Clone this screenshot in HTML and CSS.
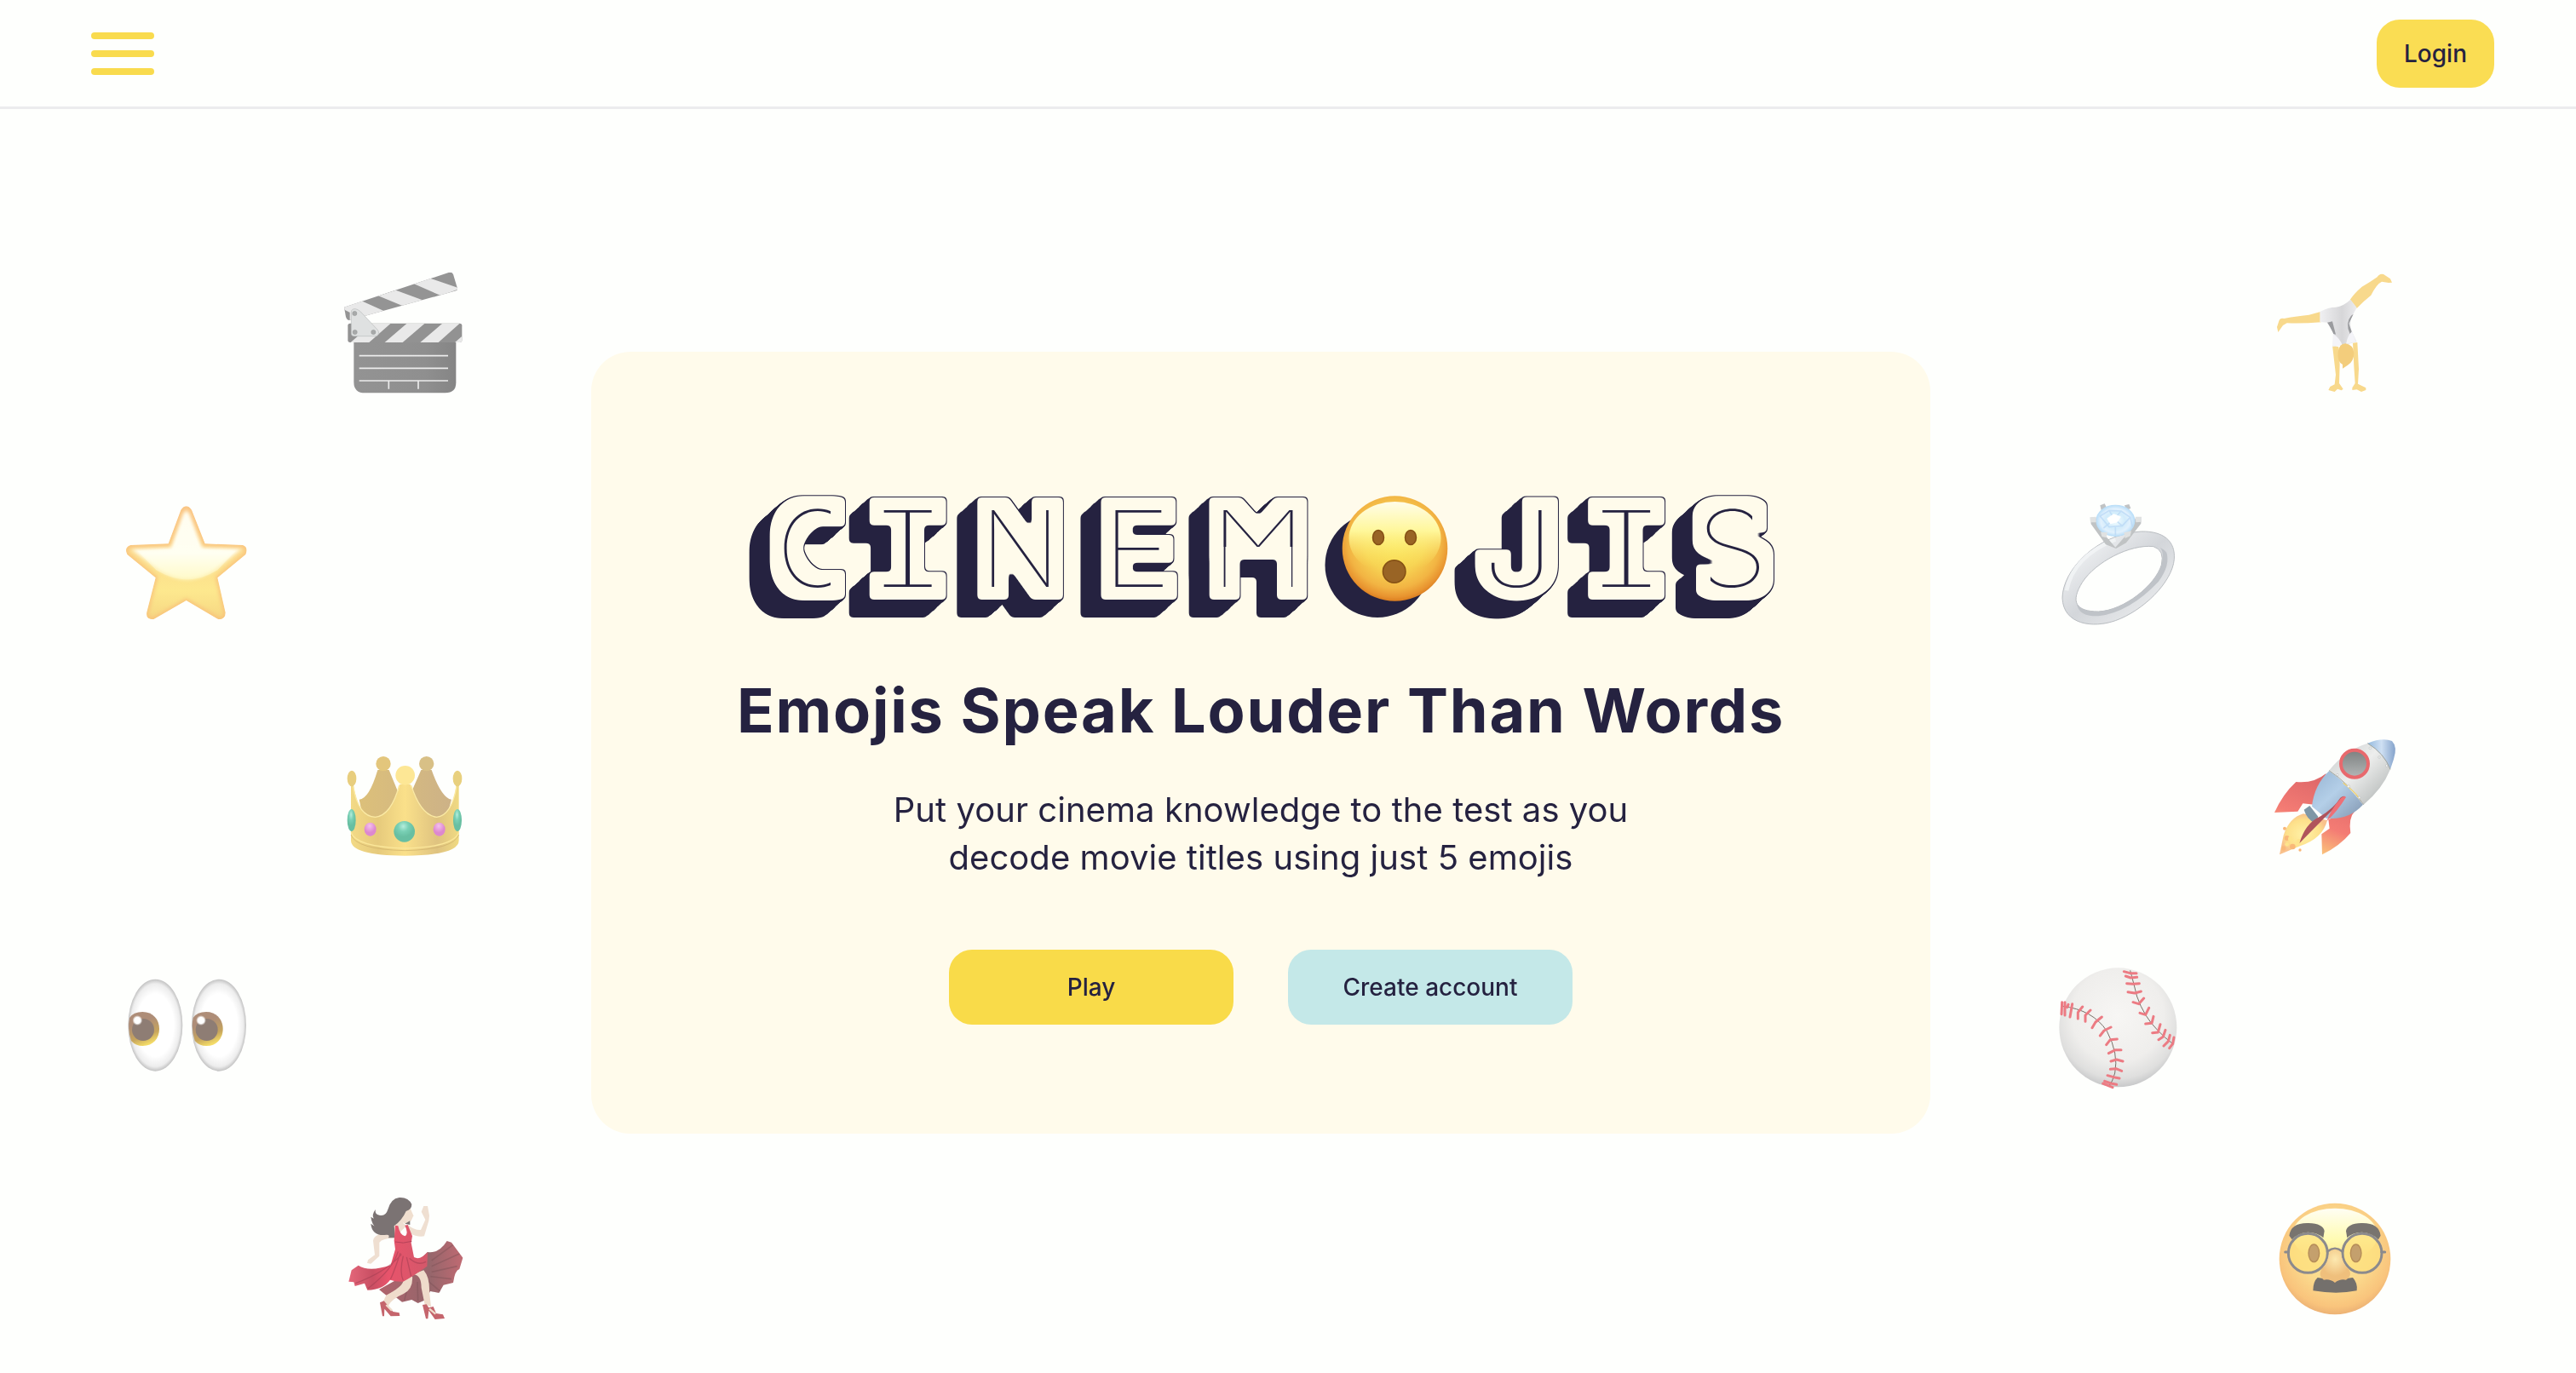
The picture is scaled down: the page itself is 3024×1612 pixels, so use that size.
FILE: index.html
```html
<!DOCTYPE html>
<html lang="en">
<head>
<meta charset="utf-8">
<title>Cinemojis</title>
<link rel="stylesheet" href="styles.css">
</head>
<body>
<header class="topbar">
  <button class="menu" aria-label="Menu"><span></span><span></span><span></span></button>
  <button class="btn login">Login</button>
</header>
<main class="stage">
  <div class="column left">
    <svg class="emoji inner first" viewBox="0 0 540 540" aria-hidden="true">
      <defs>
        <clipPath id="armTop"><path d="M72 182 440 60Q452 57 456 66L471 116Q472 121 466 124L90 228Q82 228 78 216Z"/></clipPath>
        <clipPath id="armLow"><rect x="85" y="239" width="402" height="67" rx="8"/></clipPath>
        <linearGradient id="slate"><stop offset="0" stop-color="#939393"/><stop offset=".7" stop-color="#8f8f8f"/><stop offset="1" stop-color="#858585"/></linearGradient>
      </defs>
      <path d="M106 300H466V448Q466 484 428 484H146Q106 484 106 446Z" fill="url(#slate)"/>
      <path d="M125 353H438M125 397H438M125 441H438M229 441V470M333 441V470" stroke="#ececec" stroke-width="5"/>
      <g clip-path="url(#armTop)"><path d="M60 40H480V240H60Z" fill="#949494"/><path d="M60 184 130 158 210 194 150 230ZM192 142 254 122 352 158 290 182ZM318 100 374 80 480 116 414 142ZM92 200 160 215 150 230 92 230Z" fill="#e9e9e9"/></g>
      <g clip-path="url(#armLow)"><path d="M80 230H490V310H80Z" fill="#929292"/><path d="M170 240H235L160 306H95ZM292 240H355L278 306H215ZM417 240H478L404 306H340ZM462 306 490 282V306Z" fill="#e9e9e9"/></g>
      <path d="M97 200Q97 187 112 188 122 190 130 198L190 262Q200 276 186 284H106Q97 284 97 274Z" fill="#dfe1e1" stroke="#b9bcbc" stroke-width="2"/>
      <g fill="#a7a9a9" stroke="#8f9191"><circle cx="109" cy="204" r="8"/><circle cx="110" cy="270" r="8"/><circle cx="175" cy="270" r="8"/></g>
    </svg>
    <svg class="emoji outer gap-l2" viewBox="0 0 540 540" aria-hidden="true">
      <defs>
        <linearGradient id="starBase" x2="0" y2="1"><stop offset="0" stop-color="#fdd29a"/><stop offset=".55" stop-color="#fce08c"/><stop offset=".75" stop-color="#fde88e"/><stop offset="1" stop-color="#f6d682"/></linearGradient>
        <linearGradient id="starGloss" x2="0" y2="1"><stop offset="0" stop-color="#fffdf0"/><stop offset=".6" stop-color="#fffff2"/><stop offset="1" stop-color="#fffac9"/></linearGradient>
        <clipPath id="starClip"><path id="starShape" d="M247 86Q266 60 285 86L332 205 465 210Q486 218 475 243L376 325 404 448Q404 472 380 472L266 405 150 472Q122 472 127 446L158 325 58 243Q46 218 70 210L203 205Z"/></clipPath>
        <filter id="soft" x="-10%" y="-10%" width="120%" height="120%" color-interpolation-filters="sRGB"><feGaussianBlur stdDeviation="7"/></filter>
      </defs>
      <g clip-path="url(#starClip)"><use href="#starShape" fill="url(#starBase)"/>
        <path d="M255 98Q266 85 277 98L322 218 462 222 366 298Q270 364 170 298L72 224 212 218Z" fill="url(#starGloss)" filter="url(#soft)"/>
        <path d="M262 110Q266 100 270 110L316 224 440 230 376 298Q270 364 160 298L94 230 218 224Z" fill="url(#starGloss)" opacity=".5"/>
        <use href="#starShape" fill="none" stroke="#f9c07a" stroke-width="12" filter="url(#soft)"/></g>
    </svg>
    <svg class="emoji inner2 gap-l3" viewBox="0 0 540 540" aria-hidden="true">
      <defs>
        <linearGradient id="gold"><stop offset="0" stop-color="#f3da86"/><stop offset=".25" stop-color="#e6ca7c"/><stop offset=".5" stop-color="#fae08a"/><stop offset=".8" stop-color="#dfc380"/><stop offset="1" stop-color="#f0da82"/></linearGradient>
        <linearGradient id="goldBack"><stop offset="0" stop-color="#dcc07a"/><stop offset="1" stop-color="#cdb287"/></linearGradient>
        <radialGradient id="jade" cx=".45" cy=".25"><stop offset="0" stop-color="#b5eddc"/><stop offset=".5" stop-color="#79d0b5"/><stop offset="1" stop-color="#68bfa2"/></radialGradient>
        <radialGradient id="pink" cx=".45" cy=".25"><stop offset="0" stop-color="#f4c0ee"/><stop offset="1" stop-color="#dd88cf"/></radialGradient>
      </defs>
      <path d="M95 206Q130 204 160 102H200L232 180 284 168 313 102H350Q385 200 420 206L400 280H110Z" fill="url(#goldBack)"/>
      <circle cx="180" cy="80" r="26" fill="#e3c67c"/><circle cx="332" cy="80" r="26" fill="#d8c086"/>
      <path d="M66 150H74Q90 268 152 268 212 262 238 152H275Q310 262 368 268 424 262 438 150H446V350Q446 402 256 404 66 402 66 350Z" fill="url(#gold)"/>
      <path d="M74 160Q92 266 152 268 208 262 236 156M278 156Q312 262 368 268 420 262 438 160" fill="none" stroke="#fbeaa4" stroke-width="4"/>
      <path d="M66 322Q84 374 256 378 428 374 446 322" fill="none" stroke="#fbe79a" stroke-width="4"/>
      <path d="M66 330Q84 382 256 386 428 382 446 330" fill="none" stroke="#c9ac66" stroke-width="3" opacity=".6"/>
      <circle cx="257" cy="121" r="34" fill="#fde795"/><ellipse cx="69" cy="132" rx="16" ry="28" fill="#e8ce7e"/><ellipse cx="441" cy="132" rx="16" ry="28" fill="#e8d07e"/>
      <ellipse cx="68" cy="279" rx="15" ry="39" fill="url(#jade)"/><ellipse cx="441" cy="279" rx="15" ry="39" fill="url(#jade)"/><circle cx="254" cy="319" r="37" fill="url(#jade)"/>
      <ellipse cx="134" cy="311" rx="21" ry="24" fill="url(#pink)"/><ellipse cx="377" cy="311" rx="21" ry="24" fill="url(#pink)"/>
    </svg>
    <svg class="emoji outer gap-l4" viewBox="0 0 540 540" aria-hidden="true">
      <defs>
        <radialGradient id="eyeWhite"><stop offset=".68" stop-color="#fff"/><stop offset=".9" stop-color="#ededed"/><stop offset="1" stop-color="#c2c2c2"/></radialGradient>
        <linearGradient id="iris" x1=".3" x2=".65" y2="1"><stop offset=".3" stop-color="#ae8d78"/><stop offset=".7" stop-color="#c7a55c"/><stop offset=".95" stop-color="#f4dc68"/></linearGradient>
        <radialGradient id="glint"><stop offset=".6" stop-color="#fff"/><stop offset="1" stop-color="#fff" stop-opacity="0"/></radialGradient>
        <g id="eye"><ellipse cx="157" cy="221" rx="96" ry="162" fill="url(#eyeWhite)"/><path d="M66 195Q80 174 112 174C149 174 171 201 171 234S149 294 113 294Q88 294 72 276Q58 235 66 195Z" fill="url(#iris)"/><circle cx="114" cy="237" r="39" fill="#8e7d74"/><circle cx="94" cy="204" r="18" fill="url(#glint)"/></g>
      </defs>
      <use href="#eye"/><use href="#eye" x="224"/>
    </svg>
    <svg class="emoji inner2 gap-l5" viewBox="0 0 540 540" aria-hidden="true">
      <defs>
        <linearGradient id="dress"><stop offset="0" stop-color="#e4677a"/><stop offset=".3" stop-color="#c94f63"/><stop offset=".5" stop-color="#e8536b"/><stop offset="1" stop-color="#d4586a"/></linearGradient>
        <linearGradient id="lining"><stop offset="0" stop-color="#b0636c"/><stop offset=".6" stop-color="#95666b"/><stop offset="1" stop-color="#c06a72"/></linearGradient>
      </defs>
      <path d="M336 240Q376 246 404 201L420 206 460 260 448 300Q432 304 426 348L392 356 376 384 345 378 330 408 302 420 280 408 246 416 220 396 190 392 165 372 240 330Z" fill="url(#lining)"/>
      <path d="M350 290 448 246M350 310 440 290M346 326 420 335M335 340 380 378M300 345 302 412M270 350 254 410M350 270 425 215" stroke="#7e5257" stroke-width="5" opacity=".45"/>
      <path d="M250 342Q248 362 190 392L178 418 196 432Q210 404 250 388 286 372 282 324ZM284 318Q314 320 314 366L326 426 348 432 342 380Q344 330 322 304Z" fill="#efdccb"/>
      <path d="M168 418 182 412 196 428 214 450 236 454 238 465 206 466 184 440 183 466 177 466ZM318 426 332 424 340 436 356 432 366 456 390 460 396 474 362 477 340 446 337 475 330 475Z" fill="#c5656c"/>
      <path d="M190 426 210 446M342 440 364 458" stroke="#efdccb" stroke-width="7"/>
      <path d="M252 140 262 148 230 178 222 190Q176 192 166 206L166 254 136 281 123 279 126 268 150 250 144 200Q146 186 160 180 190 152 220 144L244 124ZM266 144Q290 164 312 162L328 126 314 98 322 78 336 78 342 112 340 130 324 184Q300 188 272 174Z" fill="#efdfd1"/>
      <path d="M248 90 274 84 286 112 278 130 256 140 240 128Z" fill="#f0dfcf"/>
      <path d="M280 72Q268 46 236 48 206 52 196 90 188 116 166 110 150 108 152 90 138 110 146 122L136 116Q140 146 156 154L136 140Q140 182 184 180 206 176 198 190L222 190 218 148Q246 128 260 96 280 90 280 72ZM256 140 274 130 274 144Z" fill="#7b7373"/>
      <path d="M222 146 232 148Q238 180 256 184 270 176 256 146L266 144 282 184 278 208 288 258Q310 270 336 240L334 290Q290 322 250 344 226 346 204 338 180 372 124 374L114 350 80 360 76 346 58 344 68 304 92 287Q130 312 206 286L222 230 218 200Z" fill="url(#dress)"/>
      <path d="M232 238Q214 300 126 368M240 244Q214 320 205 336M244 248Q190 310 82 350M250 254Q236 310 250 340M262 258 278 326M272 262Q300 290 330 274" stroke="#9e3c50" stroke-width="4" fill="none" opacity=".5"/>
      <path d="M222 204Q250 212 280 202" stroke="#b64258" stroke-width="3" fill="none"/>
    </svg>
  </div>

  <section class="card">
    <svg class="wordmark" viewBox="860 570 1240 165" role="img" aria-label="Cinemojis">
      <defs>
        <clipPath id="trimC"><path d="M900 580H975V710H900Z"/></clipPath>
        <clipPath id="trimS"><path d="M1990 580H2057V630H2080V710H2008V656H1990Z"/></clipPath>
        <clipPath id="stems"><path d="M1430 590H1438.5V700H1430ZM1516 590H1530V700H1516Z"/></clipPath>
        <filter id="thicken" filterUnits="userSpaceOnUse" x="860" y="570" width="1240" height="165"><feMorphology operator="dilate" radius="18 16"/></filter>
        <filter id="block" filterUnits="userSpaceOnUse" x="860" y="570" width="1240" height="165" color-interpolation-filters="sRGB">
          <feGaussianBlur in="SourceAlpha" stdDeviation="2.5"/>
          <feComponentTransfer result="edge"><feFuncA type="linear" slope="7" intercept="-3"/></feComponentTransfer>
          <feOffset in="edge" dx="-1" dy="1" result="o1"/><feMerge result="m1"><feMergeNode in="edge"/><feMergeNode in="o1"/></feMerge>
          <feOffset in="m1" dx="-2" dy="2" result="o2"/><feMerge result="m2"><feMergeNode in="m1"/><feMergeNode in="o2"/></feMerge>
          <feOffset in="m2" dx="-3" dy="2" result="o3"/><feMerge result="m3"><feMergeNode in="m2"/><feMergeNode in="o3"/></feMerge>
          <feOffset in="m3" dx="-6" dy="5" result="o4"/><feMerge result="m4"><feMergeNode in="m3"/><feMergeNode in="o4"/></feMerge>
          <feOffset in="m4" dx="-11" dy="10" result="o5"/><feMerge result="m5"><feMergeNode in="m4"/><feMergeNode in="o5"/></feMerge>
          <feFlood flood-color="#252240"/><feComposite in2="m5" operator="in" result="solid"/>
          <feMorphology in="edge" operator="erode" radius="1" result="inside"/>
          <feFlood flood-color="#fffbeb"/><feComposite in2="inside" operator="in" result="face"/>
          <feMerge><feMergeNode in="solid"/><feMergeNode in="face"/></feMerge>
        </filter>
        <radialGradient id="skin" gradientUnits="userSpaceOnUse" cx="1637" cy="636" r="70"><stop offset="0" stop-color="#fbe75c"/><stop offset=".5" stop-color="#f7d353"/><stop offset=".78" stop-color="#f2b443"/><stop offset=".93" stop-color="#e8932f"/><stop offset="1" stop-color="#d97c1f"/></radialGradient>
        <linearGradient id="shine" x2="0" y2="1"><stop offset="0" stop-color="#fffde9"/><stop offset=".4" stop-color="#fff79a"/><stop offset=".9" stop-color="#fbe65c" stop-opacity="0"/></linearGradient>
      </defs>
      <g filter="url(#block)">
        <g filter="url(#thicken)">
          <g id="squareLetters" class="letters">
            <g clip-path="url(#trimC)"><text transform="translate(911.3 689) scale(1.05 1)">C</text></g>
            <text class="mid" transform="translate(1065.8 689) scale(1.75 1)">I</text>
            <text transform="translate(1150.6 689) scale(.985 1)">N</text>
            <text transform="translate(1293.8 689) scale(1.12 1)">E</text>
            <text transform="translate(1423 641.5) scale(.973 .472)">M</text>
            <g clip-path="url(#stems)"><text transform="translate(1423 689) scale(.973 1)">M</text></g>
            <text class="mid" transform="translate(1909.2 689) scale(1.75 1)">I</text>
            <g clip-path="url(#trimS)"><text transform="translate(1990.8 689) scale(1.12 1)">S</text></g>
          </g>
        </g>
        <g class="stroked"><text id="letterJ" class="letters" transform="translate(1739 689) scale(1.235 1)">J</text></g>
      </g>
      <g aria-hidden="true"><use href="#squareLetters"/><use href="#letterJ"/></g>
      <circle cx="1617" cy="663.5" r="61.5" fill="#252240"/>
      <circle cx="1637.5" cy="644" r="61.8" fill="url(#skin)"/>
      <ellipse cx="1637.5" cy="632" rx="54" ry="43" fill="url(#shine)"/>
      <g fill="#996425" stroke="#855014" stroke-width="1.5"><ellipse cx="1618" cy="631" rx="6.5" ry="8.5"/><ellipse cx="1656" cy="631" rx="6.5" ry="8.5"/><circle cx="1636.7" cy="671" r="13.3"/></g>
    </svg>
    <h1 class="title">Emojis Speak Louder Than Words</h1>
    <p class="lead">Put your cinema knowledge to the test as you<br>decode movie titles using just 5 emojis</p>
    <div class="actions"><button class="btn play">Play</button><button class="btn create">Create account</button></div>
  </section>

  <div class="column right">
    <svg class="emoji r-inner first" viewBox="0 0 540 540" aria-hidden="true">
      <defs><linearGradient id="suit"><stop offset="0" stop-color="#f0f0f2"/><stop offset=".6" stop-color="#d6d6d8"/><stop offset="1" stop-color="#ececee"/></linearGradient></defs>
      <path d="M222 198 182 209Q130 214 94 222 80 218 76 230L69 252 73 270 90 246 104 238Q160 240 224 235ZM326 156Q340 134 368 110 400 92 422 76 430 62 444 66L468 82 474 95 462 96 438 92Q420 100 400 140 372 162 350 186Z" fill="#f8d98c"/>
      <path d="M264 316 286 322 290 384 288 450 302 470 296 475 282 470 272 480 250 474 256 462 272 454 276 420ZM336 308 352 306 357 400 354 452 382 466 382 474 366 480 350 472 334 474 334 466 344 450 340 390Z" fill="#f8d98c"/>
      <path d="M220 198Q250 182 276 182 304 178 328 155L350 184 330 220Q324 250 332 266L350 304 310 314 266 320 268 272Q262 240 246 236L220 234Z" fill="url(#suit)"/>
      <path d="M264 232 276 278 268 276Q256 250 246 236ZM338 206 322 240 332 268 326 276Q308 238 330 212Z" fill="#9a9b9e"/>
      <path d="M266 276Q290 290 300 318L264 320ZM346 304 312 312Q318 280 334 268Z" fill="#f4f4f8"/>
      <path d="M284 340Q288 310 310 310 338 314 340 344 340 372 318 386L300 398 300 384Q280 374 284 340Z" fill="#f3cd7c"/>
    </svg>
    <svg class="emoji r-outer gap-r2" viewBox="0 0 540 540" aria-hidden="true">
      <defs>
        <linearGradient id="silver" x2="1" y2="1"><stop offset="0" stop-color="#c9ccd0"/><stop offset=".2" stop-color="#eceef0"/><stop offset=".5" stop-color="#d3d6da"/><stop offset=".8" stop-color="#e6e8ea"/><stop offset="1" stop-color="#c6c9cd"/></linearGradient>
        <radialGradient id="gem"><stop offset="0" stop-color="#f4fdff"/><stop offset=".5" stop-color="#d2ecfb"/><stop offset=".75" stop-color="#e2f1fd"/><stop offset="1" stop-color="#b5dcf8"/></radialGradient>
      </defs>
      <path fill-rule="evenodd" d="M340 162C420 160 462 196 457 260 450 340 350 440 250 476 170 504 66 490 63 396 64 300 180 172 340 162ZM384 215C300 206 180 270 134 340 90 410 110 444 190 444 280 440 390 352 412 280Q424 228 384 215Z" fill="url(#silver)" stroke="#b9bdc1" stroke-width="3"/>
      <path fill-rule="evenodd" d="M404 218Q424 228 412 280C390 352 280 440 190 444 150 444 124 434 114 416Q120 462 190 460 300 446 402 338 444 280 430 236Q420 222 404 218Z" fill="#bfc3c8"/>
      <path d="M78 370Q100 250 250 190" fill="none" stroke="#f3f5f6" stroke-width="14" opacity=".8"/>
      <path d="M162 114 180 112 204 164 250 218 296 165 322 112 341 112 340 134 288 202 252 222 216 208 164 136ZM196 70 212 64 222 84 200 86ZM282 70 298 66 304 80 288 88Z" fill="#c0c3c4"/>
      <ellipse cx="250" cy="124" rx="69" ry="56" fill="url(#gem)"/>
      <path d="M196 108 228 88 270 90 302 112 274 142 228 146ZM196 108 228 146M228 88 246 118 274 142M270 90 246 118 208 150M302 112 310 146M250 146 250 176" fill="none" stroke="#b9d8f5" stroke-width="5" opacity=".75"/>
      <path d="M220 116 244 100 270 110 256 130 232 136Z" fill="#fff"/>
      <path d="M160 112 182 110 182 130 162 130ZM320 110 342 110 342 128 322 130ZM198 164 222 166 218 184 202 180ZM280 166 306 160 302 178 284 186Z" fill="#e0e2e2"/>
    </svg>
    <svg class="emoji r-inner gap-r3" viewBox="0 0 540 540" aria-hidden="true">
      <defs>
        <linearGradient id="hull" x2="1" y2="1"><stop offset="0" stop-color="#c6caca"/><stop offset=".45" stop-color="#edeeed"/><stop offset=".75" stop-color="#c9cccb"/><stop offset="1" stop-color="#9ea3a3"/></linearGradient>
        <linearGradient id="nose"><stop offset="0" stop-color="#93b9de"/><stop offset=".5" stop-color="#cfe0f3"/><stop offset="1" stop-color="#84a3cb"/></linearGradient>
        <linearGradient id="tail" x2="1" y2="1"><stop offset="0" stop-color="#96b4d2"/><stop offset=".45" stop-color="#b4cfe8"/><stop offset="1" stop-color="#8196b0"/></linearGradient>
        <linearGradient id="fin" x1=".6" x2=".2" y2="1"><stop offset=".1" stop-color="#e0696a"/><stop offset=".55" stop-color="#f47c74"/><stop offset="1" stop-color="#fde27e"/></linearGradient>
        <radialGradient id="flame"><stop offset="0" stop-color="#fff1a6"/><stop offset=".7" stop-color="#fde08a"/><stop offset="1" stop-color="#f9c18c"/></radialGradient>
        <linearGradient id="porthole" x2="0" y2="1"><stop offset="0" stop-color="#7c8080"/><stop offset="1" stop-color="#b3b6b6"/></linearGradient>
      </defs>
      <path d="M242 174Q200 210 136 204 90 246 60 312L142 308 160 280 200 284ZM344 306Q320 330 328 384 290 430 228 460L226 388 254 368 250 336Z" fill="url(#fin)"/>
      <path d="M162 316Q112 330 92 392L78 460 150 430Q230 404 246 340Z" fill="url(#flame)"/>
      <g fill="#f9b878"><circle cx="96" cy="368" r="6"/><circle cx="150" cy="444" r="5"/><circle cx="104" cy="402" r="9"/><circle cx="92" cy="438" r="8"/><circle cx="124" cy="432" r="10"/></g><g fill="#fde48c"><circle cx="116" cy="404" r="8"/><circle cx="104" cy="424" r="7"/><circle cx="146" cy="414" r="9"/></g>
      <path d="M164 302 184 288 214 326 204 350Q174 336 164 302Z" fill="#7f97a6"/>
      <path d="M252 166Q306 200 372 284 320 340 242 332L192 290Q200 216 252 166Z" fill="url(#tail)"/>
      <path d="M252 164Q310 92 388 68 450 100 468 160 440 230 374 284 320 206 252 164Z" fill="url(#hull)"/>
      <path d="M388 68Q440 46 474 60 494 80 480 124L468 160Q442 100 388 68Z" fill="url(#nose)"/>
      <path d="M252 164Q320 208 374 284M388 68Q446 102 468 160" fill="none" stroke="#a0a39b" stroke-width="3"/><path d="M302 208Q340 236 360 264" fill="none" stroke="#f3d470" stroke-width="4"/>
      <circle cx="342" cy="140" r="48" fill="url(#porthole)" stroke="#e8696d" stroke-width="12"/>
      <path d="M310 258Q236 330 148 420 168 350 220 326 270 296 292 260 306 250 310 258Z" fill="#b0545b"/><path d="M312 258Q304 250 290 266 262 296 244 342 280 310 312 258Z" fill="#ee7076"/>
      <g fill="#f2f3f2" stroke="#9da0a0"><circle cx="282" cy="179" r="4"/><circle cx="321" cy="220" r="5"/><circle cx="359" cy="259" r="4"/><circle cx="397" cy="85" r="4"/><circle cx="429" cy="117" r="4"/><circle cx="455" cy="147" r="4"/></g>
    </svg>
    <svg class="emoji r-outer gap-r4" viewBox="0 0 540 540" aria-hidden="true">
      <defs><radialGradient id="ball" cx=".5" cy=".4" r=".6"><stop offset="0" stop-color="#f7f6f4"/><stop offset=".65" stop-color="#efeeec"/><stop offset=".88" stop-color="#dfdfde"/><stop offset="1" stop-color="#c8c9ca"/></radialGradient></defs>
      <ellipse cx="259" cy="259" rx="207" ry="210" fill="url(#ball)"/>
      <path d="M62 184Q170 196 220 272 262 350 248 420 240 450 226 468M302 58Q316 110 326 150 350 220 398 268 424 296 454 318" fill="none" stroke="#777068" stroke-width="3"/>
      <path d="M62 170 60 212M72 170 72 216M84 178 80 188M98 176 90 222M134 186 118 206 118 228M162 198 144 216 144 238M202 222 180 240 168 260M234 258 210 270 196 288M256 300 232 302 218 320M270 338 250 338 226 350M276 378 254 372 234 378M272 412 252 404 232 406M264 438 244 434 222 428M254 460 234 456 212 448M240 470 206 456M280 62 302 68 324 68M286 78 304 84 326 82M290 104 312 106 334 104M294 134 318 138 340 132M312 170 332 176 350 156M336 208 356 214 368 190M356 246 378 244 384 220M380 278 400 276 408 248M402 302 418 292 426 268M420 324 436 308 442 286M440 332 452 316 456 294" fill="none" stroke="#ec7b83" stroke-width="9" stroke-linecap="round" stroke-linejoin="round"/>
    </svg>
    <svg class="emoji r-inner gap-r5" viewBox="0 0 540 540" aria-hidden="true">
      <defs>
        <radialGradient id="mask" cx=".5" cy=".42" r=".6"><stop offset="0" stop-color="#fdee9c"/><stop offset=".55" stop-color="#fbd98c"/><stop offset=".85" stop-color="#f9c47c"/><stop offset="1" stop-color="#e9ad72"/></radialGradient>
        <linearGradient id="brow" x2="0" y2="1"><stop offset="0" stop-color="#fffef4"/><stop offset=".6" stop-color="#fffbb0"/><stop offset="1" stop-color="#fdee9c" stop-opacity="0"/></linearGradient>
        <radialGradient id="bulb" cy=".3"><stop offset="0" stop-color="#fde9b0"/><stop offset="1" stop-color="#efbf7c"/></radialGradient>
      </defs>
      <circle cx="273" cy="264" r="196" fill="url(#mask)"/><ellipse cx="273" cy="180" rx="150" ry="94" fill="url(#brow)"/>
      <g fill="#fde07e" fill-opacity=".75" stroke="#8b8a8d" stroke-width="9"><circle cx="178" cy="244" r="69"/><circle cx="369" cy="244" r="69"/></g>
      <path d="M247 238Q273 218 299 238M98 240 110 240M437 240 449 240" fill="none" stroke="#8b8a8d" stroke-width="9" stroke-linecap="round"/>
      <ellipse cx="199" cy="244" rx="19" ry="31" fill="#c4a06d" stroke="#b58c58" stroke-width="4"/><ellipse cx="347" cy="244" rx="19" ry="31" fill="#c4a06d" stroke="#b58c58" stroke-width="4"/>
      <path d="M112 182Q118 136 180 138 232 140 236 166L232 190Q210 170 178 170 142 172 122 196ZM434 182Q428 136 366 138 316 140 312 166L316 190Q336 170 368 170 404 172 426 196Z" fill="#78746f"/>
      <path d="M212 330Q270 342 336 330 354 350 350 376 280 390 196 376 196 344 212 330Z" fill="#74706c"/>
      <path d="M254 238Q273 222 292 238 300 284 322 300 336 326 312 338 290 334 273 348 256 334 234 338 212 326 226 300 248 282 254 238Z" fill="url(#bulb)"/>
    </svg>
  </div>
</main>
</body>
</html>
```
FILE: styles.css
```css
* { box-sizing: border-box; }
body { margin: 0; background: #fefffd; color: #252240; font-family: Inter, sans-serif; overflow: hidden; }

.topbar { height: 128px; padding: 0 96px 0 107px; display: flex; align-items: center; justify-content: space-between; border-bottom: 3px solid #ececee; }
.menu { width: 74px; padding: 0; border: 0; background: none; display: flex; flex-direction: column; gap: 13px; }
.menu span { height: 8px; border-radius: 4px; background: #f9db4e; }

.btn { border: 0; padding: 0; border-radius: 27px; font: 500 28px Inter, sans-serif; color: #252240; }
.login { width: 138px; height: 80px; background: #fadd53; }

.stage { display: grid; grid-template-columns: 694px 1572px 1fr; align-items: start; height: 1484px; }
.column { display: flex; flex-direction: column; align-items: flex-start; }
.emoji { width: 180px; height: 180px; flex: none; }
.first { margin-top: 172px; }
.inner { margin-left: 380px; }
.inner2 { margin-left: 390px; }
.outer { margin-left: 130px; }
.r-inner { margin-left: 384px; }
.r-outer { margin-left: 134px; }
.gap-l2 { margin-top: 90px; }
.gap-l3 { margin-top: 120px; }
.gap-l4, .gap-l5 { margin-top: 80px; }
.gap-r2 { margin-top: 90px; }
.gap-r3 { margin-top: 100px; }
.gap-r4, .gap-r5 { margin-top: 90px; }

.card { height: 918px; margin-top: 285px; padding-top: 157px; border-radius: 46px; background: #fffbeb; display: flex; flex-direction: column; align-items: center; text-align: center; }
.wordmark { width: 1240px; height: 165px; flex: none; }
.letters { font: 100 124px Inter, sans-serif; font-feature-settings: "cv08"; fill: #252240; }
.mid { text-anchor: middle; }
.stroked { stroke: #252240; stroke-width: 33px; stroke-linejoin: miter; }

.title { margin: 54px 0 0; font-size: 72px; font-weight: 700; line-height: 90px; letter-spacing: .025em; }
.lead { margin: 44px 0 0; font-size: 40px; line-height: 56px; letter-spacing: .05px; }
.actions { margin-top: 80px; display: flex; gap: 64px; }
.play, .create { width: 334px; height: 88px; }
.play { background: #f9db49; }
.create { background: #c4e8e8; }
```
